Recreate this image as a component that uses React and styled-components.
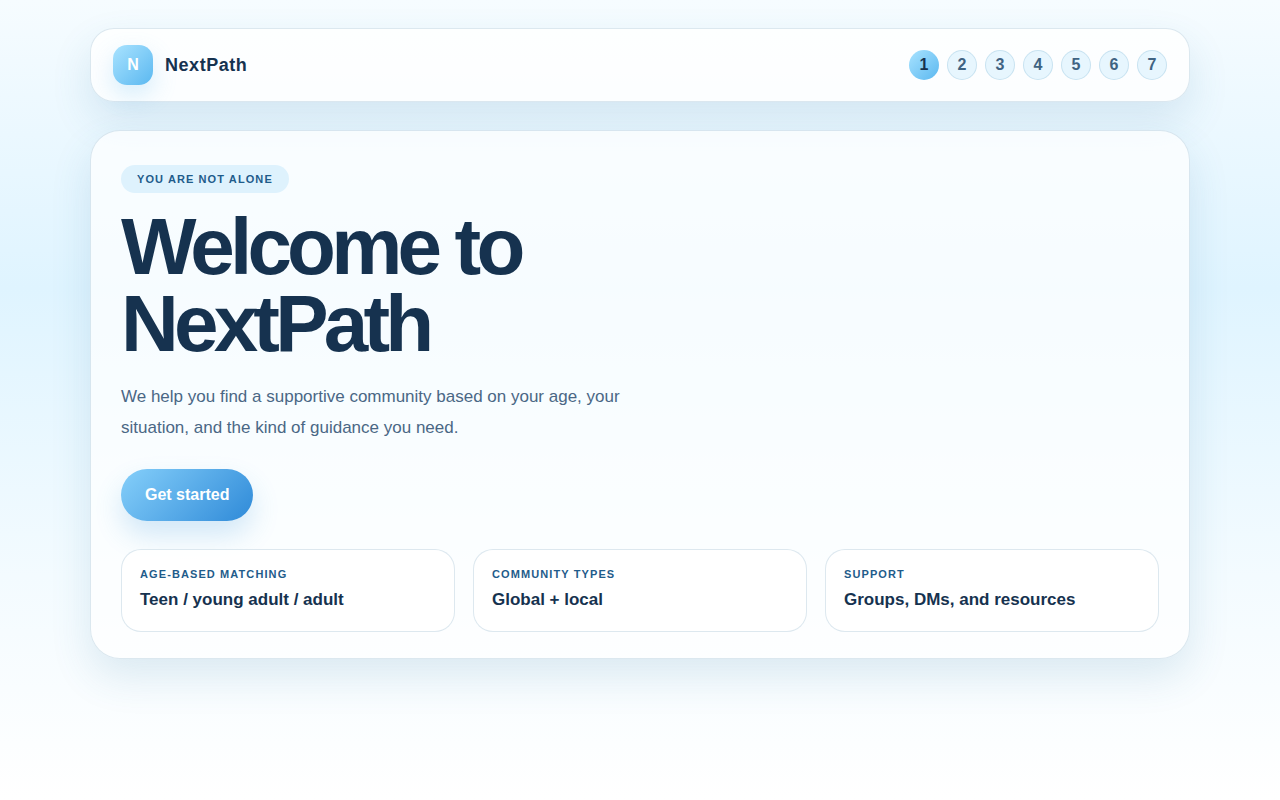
import React from "react";
import styled, { createGlobalStyle } from "styled-components";

const GlobalStyle = createGlobalStyle`
  *, *::before, *::after { box-sizing: border-box; }
  body {
    margin: 0;
    min-height: 100vh;
    font-family: "Liberation Sans", Arial, sans-serif;
    color: #16324f;
    background: linear-gradient(180deg, #f6fcff 0%, #eef9ff 12%, #dff4ff 36%, #f3fbff 72%, #ffffff 100%) no-repeat;
  }
`;

const Page = styled.div`
  width: 100%;
  max-width: 1180px;
  margin: 0 auto;
  padding: 28px 40px;
  display: flex;
  flex-direction: column;
  gap: 28px;
`;

const TopBar = styled.header`
  display: flex;
  flex-wrap: wrap;
  align-items: center;
  justify-content: space-between;
  gap: 16px;
  padding: 16px 22px;
  border: 1px solid rgba(64, 130, 165, 0.18);
  border-radius: 24px;
  background: rgba(255, 255, 255, 0.82);
  box-shadow: 0 18px 40px rgba(50, 120, 160, 0.14);
`;

const Brand = styled.div`
  display: flex;
  align-items: center;
  gap: 12px;
`;

const BrandMark = styled.span`
  display: grid;
  place-items: center;
  width: 40px;
  height: 40px;
  border-radius: 14px;
  background: linear-gradient(135deg, #a9e3ff, #5bb8f0);
  box-shadow: 0 10px 24px rgba(91, 184, 240, 0.24);
  color: #ffffff;
  font-size: 16px;
  font-weight: 700;
`;

const BrandName = styled.span`
  font-size: 18px;
  font-weight: 700;
  letter-spacing: 0.03em;
`;

const Steps = styled.ol`
  display: flex;
  gap: 8px;
  margin: 0;
  padding: 0;
  list-style: none;
`;

const Step = styled.li`
  display: grid;
  place-items: center;
  width: 30px;
  height: 30px;
  border: 1px solid ${({ $active }) => ($active ? "transparent" : "rgba(91, 160, 195, 0.22)")};
  border-radius: 50%;
  background: ${({ $active }) =>
    $active ? "linear-gradient(135deg, #a9e3ff, #5bb8f0) border-box" : "#e7f6fe"};
  color: ${({ $active }) => ($active ? "#16324f" : "#3f6382")};
  font-size: 16px;
  font-weight: 700;
`;

const Card = styled.main`
  display: flex;
  flex-direction: column;
  align-items: flex-start;
  padding: 34px 30px 26px;
  border: 1px solid rgba(64, 130, 165, 0.18);
  border-radius: 30px;
  background: rgba(255, 255, 255, 0.72);
  box-shadow: 0 18px 40px rgba(50, 120, 160, 0.14);
`;

const Badge = styled.p`
  margin: 0 0 15px;
  padding: 0 16px;
  border-radius: 14px;
  background: #def2fd;
  color: #1f5c8b;
  font-size: 11px;
  line-height: 28px;
  font-weight: 700;
  letter-spacing: 0.1em;
  text-transform: uppercase;
`;

const Title = styled.h1`
  max-width: 520px;
  margin: 0 0 19px;
  font-size: 80px;
  line-height: 77px;
  font-weight: 700;
  letter-spacing: -0.06em;
`;

const Lead = styled.p`
  max-width: 560px;
  margin: 0 0 26px;
  color: #4a6785;
  font-size: 17px;
  line-height: 31px;
`;

const PrimaryButton = styled.button`
  height: 52px;
  margin: 0 0 28px;
  padding: 0 24px;
  border: 0;
  border-radius: 26px;
  background: linear-gradient(135deg, #85cffa, #2f8ad8);
  box-shadow: 0 14px 28px rgba(47, 138, 216, 0.2);
  color: #ffffff;
  font: inherit;
  font-size: 16px;
  font-weight: 700;
  cursor: pointer;
`;

const Features = styled.section`
  display: grid;
  grid-template-columns: repeat(auto-fit, minmax(240px, 1fr));
  gap: 18px;
  width: 100%;
`;

const Feature = styled.article`
  padding: 18px;
  border: 1px solid rgba(64, 130, 165, 0.18);
  border-radius: 20px;
  background: rgba(255, 255, 255, 0.86);
`;

const FeatureLabel = styled.h2`
  margin: 0 0 5px;
  color: #1f5c8b;
  font-size: 11px;
  line-height: 13px;
  font-weight: 700;
  letter-spacing: 0.1em;
  text-transform: uppercase;
`;

const FeatureValue = styled.p`
  margin: 0;
  font-size: 17px;
  line-height: 27px;
  font-weight: 700;
`;

const steps = [1, 2, 3, 4, 5, 6, 7];

const features = [
  { label: "Age-based matching", value: "Teen / young adult / adult" },
  { label: "Community types", value: "Global + local" },
  { label: "Support", value: "Groups, DMs, and resources" },
];

export default function App() {
  const current = 1;
  return (
    <>
      <GlobalStyle />
      <Page>
        <TopBar>
          <Brand>
            <BrandMark>N</BrandMark>
            <BrandName>NextPath</BrandName>
          </Brand>
          <Steps>
            {steps.map((n) => (
              <Step key={n} $active={n === current} aria-current={n === current ? "step" : undefined}>
                {n}
              </Step>
            ))}
          </Steps>
        </TopBar>
        <Card>
          <Badge>You are not alone</Badge>
          <Title>Welcome to NextPath</Title>
          <Lead>
            We help you find a supportive community based on your age, your situation, and the kind of
            guidance you need.
          </Lead>
          <PrimaryButton type="button">Get started</PrimaryButton>
          <Features>
            {features.map(({ label, value }) => (
              <Feature key={label}>
                <FeatureLabel>{label}</FeatureLabel>
                <FeatureValue>{value}</FeatureValue>
              </Feature>
            ))}
          </Features>
        </Card>
      </Page>
    </>
  );
}
